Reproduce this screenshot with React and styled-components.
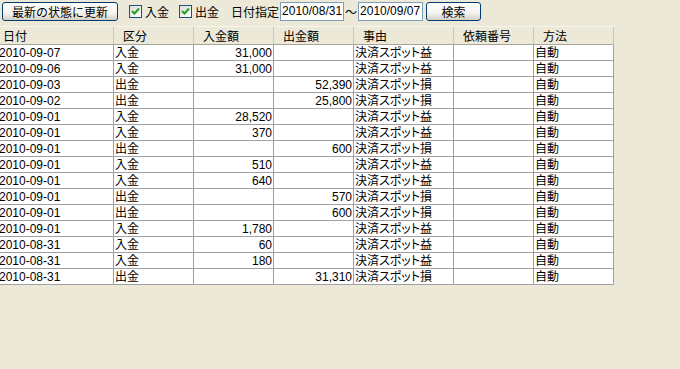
import React from 'react';
import styled, { createGlobalStyle } from 'styled-components';

const GlobalStyle = createGlobalStyle`
  body {
    margin: 0;
    background: #ece9d8;
    font-family: "Liberation Sans", "Noto Sans CJK JP", sans-serif;
    font-size: 12px;
    color: #000;
  }
`;

const rows = [
  ['2010-09-07', '入金', '31,000', '', '決済スポット益', '', '自動'],
  ['2010-09-06', '入金', '31,000', '', '決済スポット益', '', '自動'],
  ['2010-09-03', '出金', '', '52,390', '決済スポット損', '', '自動'],
  ['2010-09-02', '出金', '', '25,800', '決済スポット損', '', '自動'],
  ['2010-09-01', '入金', '28,520', '', '決済スポット益', '', '自動'],
  ['2010-09-01', '入金', '370', '', '決済スポット益', '', '自動'],
  ['2010-09-01', '出金', '', '600', '決済スポット損', '', '自動'],
  ['2010-09-01', '入金', '510', '', '決済スポット益', '', '自動'],
  ['2010-09-01', '入金', '640', '', '決済スポット益', '', '自動'],
  ['2010-09-01', '出金', '', '570', '決済スポット損', '', '自動'],
  ['2010-09-01', '出金', '', '600', '決済スポット損', '', '自動'],
  ['2010-09-01', '入金', '1,780', '', '決済スポット益', '', '自動'],
  ['2010-08-31', '入金', '60', '', '決済スポット益', '', '自動'],
  ['2010-08-31', '入金', '180', '', '決済スポット益', '', '自動'],
  ['2010-08-31', '出金', '', '31,310', '決済スポット損', '', '自動'],
];

const headers = ['日付', '区分', '入金額', '出金額', '事由', '依頼番号', '方法'];
const rightCols = [2, 3];

const Page = styled.div`
  width: 680px;
  height: 369px;
  overflow: hidden;
`;

const Toolbar = styled.div`
  display: flex;
  align-items: center;
  height: 22px;
  padding: 1px 0 0 2px;
  box-sizing: border-box;
`;

const Button = styled.button`
  height: 19px;
  width: ${({ w }) => w}px;
  margin-right: ${({ mr }) => mr || 0}px;
  margin-left: ${({ ml }) => ml || 0}px;
  padding: 0;
  border: 1px solid #003c74;
  border-radius: 3px;
  background: linear-gradient(#ffffff, #f4f3ee 60%, #d6d0c5);
  font-family: "Noto Sans CJK JP", sans-serif;
  font-size: 12px;
  line-height: 17px;
  color: #000;
`;

const Check = styled.label`
  display: flex;
  align-items: center;
  gap: 3px;
  margin-right: ${({ mr }) => mr}px;
  font-family: "Noto Sans CJK JP", sans-serif;
`;

const Box = styled.span`
  width: 11px;
  height: 11px;
  border: 1px solid #1c5180;
  background: linear-gradient(135deg, #dcdcd7, #ffffff);
  display: flex;
  align-items: center;
  justify-content: center;
`;

const Label = styled.span`
  font-family: "Noto Sans CJK JP", sans-serif;
  margin-right: 1px;
`;

const Field = styled.div`
  width: ${({ w }) => w}px;
  height: 17px;
  border: 1px solid #7f9db9;
  background: #fff;
  line-height: 17px;
  padding-left: 1px;
  box-sizing: content-box;
`;

const Tilde = styled.span`
  width: 14px;
  text-align: center;
  font-family: "Noto Sans CJK JP", sans-serif;
`;

const Grid = styled.div`
  display: grid;
  grid-template-columns: 114px 80px 80px 80px 100px 80px 80px;
  width: 614px;
  margin-top: 4px;
`;

const HeadCell = styled.div`
  height: 19px;
  line-height: 18px;
  padding-left: ${({ first }) => (first ? 3 : 9)}px;
  border-top: 1px solid #f6f5ee;
  border-right: 1px solid #cbc7b8;
  border-bottom: 1px solid #a7a596;
  box-sizing: border-box;
  font-family: "Noto Sans CJK JP", sans-serif;
  white-space: nowrap;
  overflow: hidden;
`;

const Cell = styled.div`
  height: 16px;
  line-height: 16px;
  background: #fff;
  border-right: 1px solid #a0a0a0;
  border-bottom: 1px solid #a0a0a0;
  box-sizing: border-box;
  text-align: ${({ right }) => (right ? 'right' : 'left')};
  padding: 0 1px;
  text-indent: ${({ first }) => (first ? -2 : 0)}px;
  white-space: nowrap;
  overflow: hidden;
  font-feature-settings: "palt";
`;

function CheckMark() {
  return (
    <svg width="9" height="9" viewBox="0 0 9 9">
      <path d="M1 4 L3.5 6.5 L8 1.5" stroke="#21a121" strokeWidth="2" fill="none" />
    </svg>
  );
}

export default function App() {
  return (
    <Page>
      <GlobalStyle />
      <Toolbar>
        <Button w={116} mr={11}>最新の状態に更新</Button>
        <Check mr={10}>
          <Box><CheckMark /></Box>入金
        </Check>
        <Check mr={12}>
          <Box><CheckMark /></Box>出金
        </Check>
        <Label>日付指定</Label>
        <Field w={61}>2010/08/31</Field>
        <Tilde>～</Tilde>
        <Field w={62}>2010/09/07</Field>
        <Button w={55} ml={3}>検索</Button>
      </Toolbar>
      <Grid>
        {headers.map((h, i) => (
          <HeadCell key={h} first={i === 0}>{h}</HeadCell>
        ))}
        {rows.map((r, ri) =>
          r.map((v, ci) => (
            <Cell key={ri + '-' + ci} right={rightCols.includes(ci)} first={ci === 0}>
              {v}
            </Cell>
          ))
        )}
      </Grid>
    </Page>
  );
}
